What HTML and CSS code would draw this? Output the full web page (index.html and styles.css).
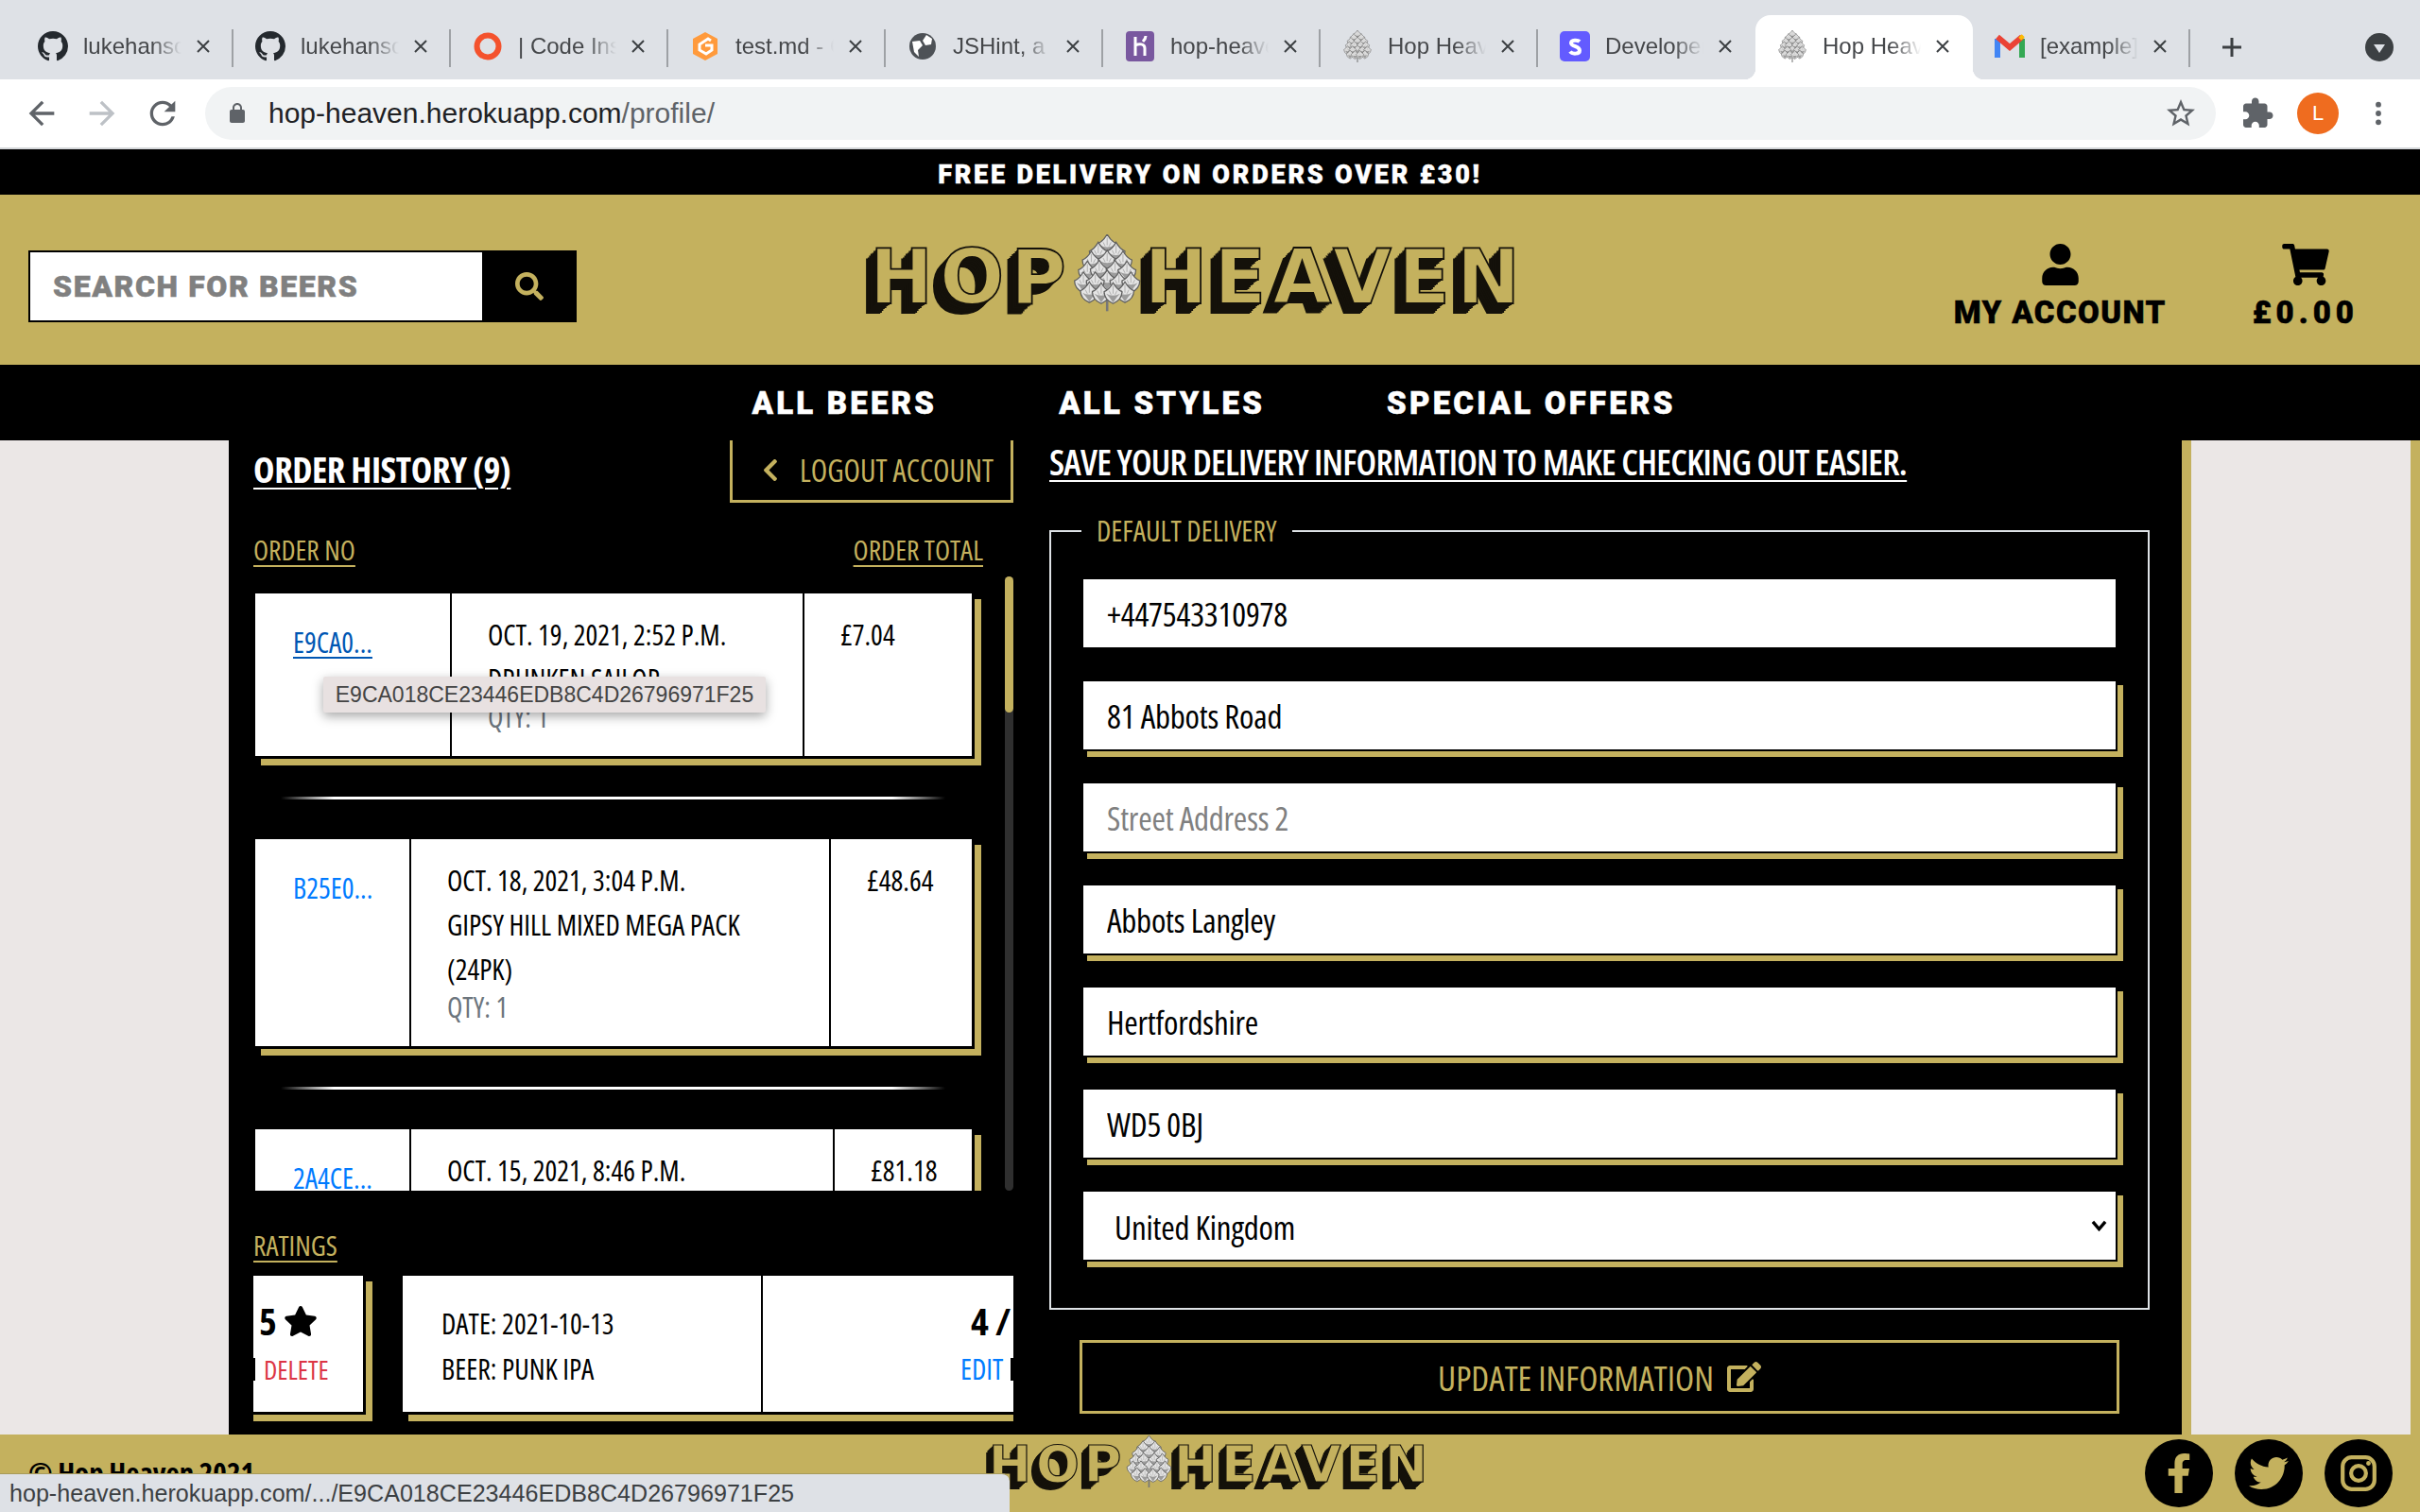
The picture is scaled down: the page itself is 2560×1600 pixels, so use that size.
FILE: index.html
```html
<!doctype html>
<html lang="en">
<head>
<meta charset="utf-8">
<title>Hop Heaven</title>
<link rel="stylesheet" href="styles.css">
</head>
<body>
<svg class="defs" aria-hidden="true">
  <symbol id="x" viewBox="0 0 16 16"><path d="M2 2l12 12M14 2L2 14" stroke="currentColor" stroke-width="2" fill="none"/></symbol>
  <symbol id="gh" viewBox="0 0 16 16"><path fill="#24292e" d="M8 0C3.58 0 0 3.58 0 8c0 3.54 2.29 6.53 5.47 7.59.4.07.55-.17.55-.38 0-.19-.01-.82-.01-1.49-2.01.37-2.53-.49-2.69-.94-.09-.23-.48-.94-.82-1.13-.28-.15-.68-.52-.01-.53.63-.01 1.08.58 1.23.82.72 1.21 1.87.87 2.33.66.07-.52.28-.87.51-1.07-1.78-.2-3.64-.89-3.64-3.95 0-.87.31-1.59.82-2.15-.08-.2-.36-1.02.08-2.12 0 0 .67-.21 2.2.82.64-.18 1.32-.27 2-.27.68 0 1.36.09 2 .27 1.53-1.04 2.2-.82 2.2-.82.44 1.1.16 1.92.08 2.12.51.56.82 1.27.82 2.15 0 3.07-1.87 3.75-3.65 3.95.29.25.54.73.54 1.48 0 1.07-.01 1.93-.01 2.2 0 .21.15.46.55.38A8.013 8.013 0 0016 8c0-4.42-3.58-8-8-8z"/></symbol>
  <symbol id="leaf" viewBox="0 0 20 22" overflow="visible"><path d="M1 9q5-2 9-9q4 7 9 9q0 8-9 12q-9-4-9-12z" fill="#e4e4e4" stroke="#5f5f5f" stroke-width="1.2"/><path d="M3 11q3 3 7 9q4-6 7-9q-3 2-7 2t-7-2z" fill="#9c9c9c"/><path d="M10 3v8M6 8l2 4M14 8l-2 4" stroke="#a8a8a8" stroke-width=".8" fill="none"/></symbol>
  <symbol id="cone" viewBox="0 0 72 78">
    <rect x="34.8" y="66" width="2.4" height="12" fill="#777"/>
    <use href="#leaf" x="26" y="0" width="20" height="22"/>
    <use href="#leaf" x="17" y="8" width="20" height="22"/><use href="#leaf" x="35" y="8" width="20" height="22"/>
    <use href="#leaf" x="10" y="17" width="20" height="22"/><use href="#leaf" x="26" y="16" width="20" height="22"/><use href="#leaf" x="42" y="17" width="20" height="22"/>
    <use href="#leaf" x="6" y="27" width="20" height="22"/><use href="#leaf" x="18" y="26" width="20" height="22"/><use href="#leaf" x="34" y="26" width="20" height="22"/><use href="#leaf" x="46" y="27" width="20" height="22"/>
    <use href="#leaf" x="2" y="38" width="20" height="22"/><use href="#leaf" x="26" y="36" width="20" height="22"/><use href="#leaf" x="14" y="38" width="20" height="22"/><use href="#leaf" x="38" y="38" width="20" height="22"/><use href="#leaf" x="50" y="38" width="20" height="22"/>
    <use href="#leaf" x="8" y="48" width="20" height="22"/><use href="#leaf" x="44" y="48" width="20" height="22"/><use href="#leaf" x="20" y="49" width="20" height="22"/><use href="#leaf" x="32" y="49" width="20" height="22"/>
  </symbol>
</svg>

<div class="chrome">
  <div class="tabstrip">
    <div class="tab"><svg class="fav"><use href="#gh"/></svg><span class="tab-title">lukehanson</span><svg class="tab-x"><use href="#x"/></svg></div>
    <div class="tab"><svg class="fav"><use href="#gh"/></svg><span class="tab-title">lukehanson</span><svg class="tab-x"><use href="#x"/></svg></div>
    <div class="tab"><svg class="fav" viewBox="0 0 32 32"><circle cx="16" cy="16" r="11.5" fill="none" stroke="#f4522d" stroke-width="6"/></svg><span class="tab-title">| Code Institute</span><svg class="tab-x"><use href="#x"/></svg></div>
    <div class="tab"><svg class="fav" viewBox="0 0 32 32"><path d="M16 1L29 8v16l-13 7-13-7V8z" fill="#ff9a3c"/><path d="M22 10l-3-2-9 6v6l7 4 6-4v-5h-7" fill="none" stroke="#fff" stroke-width="3"/></svg><span class="tab-title">test.md - Gitpod</span><svg class="tab-x"><use href="#x"/></svg></div>
    <div class="tab"><svg class="fav" viewBox="0 0 32 32"><circle cx="16" cy="16" r="14" fill="#4d5156"/><path d="M5 11l8-1 3 5-5 5 1 7-5-5zM20 4l6 4-1 6-6 1-3-5z" fill="#fff"/></svg><span class="tab-title">JSHint, a JavaScript</span><svg class="tab-x"><use href="#x"/></svg></div>
    <div class="tab"><svg class="fav" viewBox="0 0 32 32"><rect x="1" y="0" width="30" height="32" rx="4" fill="#79589f"/><path d="M11 6v20M11 15c4-2 10-2 10 3v8M22 5c0 3-1 4-3 6" fill="none" stroke="#fff" stroke-width="3"/></svg><span class="tab-title">hop-heaven</span><svg class="tab-x"><use href="#x"/></svg></div>
    <div class="tab"><svg class="fav"><use href="#cone"/></svg><span class="tab-title">Hop Heaven</span><svg class="tab-x"><use href="#x"/></svg></div>
    <div class="tab tab-before"><svg class="fav" viewBox="0 0 32 32"><rect width="32" height="32" rx="5" fill="#635bff"/><path d="M21 11c-2-2-9-2-9 1.500 0 4 9 3 9 8 0 4-8 4-10 1" fill="none" stroke="#fff" stroke-width="4"/></svg><span class="tab-title">Developers</span><svg class="tab-x"><use href="#x"/></svg></div>
    <div class="tab tab-active"><svg class="fav"><use href="#cone"/></svg><span class="tab-title">Hop Heaven</span><svg class="tab-x"><use href="#x"/></svg></div>
    <div class="tab"><svg class="fav" viewBox="0 0 32 32"><path d="M3 28V8" stroke="#4285f4" stroke-width="6"/><path d="M29 28V8" stroke="#34a853" stroke-width="6"/><path d="M3 6l13 11L29 6" fill="none" stroke="#ea4335" stroke-width="6"/><path d="M27 5l3 3" stroke="#fbbc04" stroke-width="5"/></svg><span class="tab-title">[example] Confirm</span><svg class="tab-x"><use href="#x"/></svg></div>
    <svg class="newtab" viewBox="0 0 24 24"><path d="M12 2v20M2 12h20" stroke="#3c4043" stroke-width="3"/></svg>
    <svg class="tabmenu" viewBox="0 0 30 30"><circle cx="15" cy="15" r="15" fill="#3c4043"/><path d="M9 12h12l-6 9z" fill="#dee1e6"/></svg>
  </div>
  <div class="toolbar">
    <svg class="tool" viewBox="0 0 24 24"><path fill="#5f6368" d="M20 11H7.830l5.590-5.590L12 4l-8 8 8 8 1.410-1.410L7.830 13H20v-2z"/></svg>
    <svg class="tool" viewBox="0 0 24 24"><path fill="#bdc1c6" d="M4 11h12.170l-5.590-5.590L12 4l8 8-8 8-1.410-1.410L16.170 13H4v-2z"/></svg>
    <svg class="tool" viewBox="0 0 24 24"><path fill="#5f6368" d="M17.650 6.350A7.958 7.958 0 0012 4c-4.420 0-7.990 3.580-7.990 8s3.570 8 7.990 8c3.730 0 6.840-2.550 7.730-6h-2.080A5.990 5.990 0 0112 18c-3.310 0-6-2.690-6-6s2.690-6 6-6c1.660 0 3.140.69 4.220 1.780L13 11h7V4l-2.350 2.350z"/></svg>
    <div class="omnibox">
      <svg class="lock" viewBox="0 0 24 24"><path fill="#5f6368" d="M18 8h-1V6c0-2.760-2.240-5-5-5S7 3.240 7 6v2H6c-1.100 0-2 .9-2 2v10c0 1.100.9 2 2 2h12c1.100 0 2-.9 2-2V10c0-1.100-.9-2-2-2zM9 6c0-1.660 1.340-3 3-3s3 1.340 3 3v2H9V6z"/></svg>
      <span class="url">hop-heaven.herokuapp.com<span class="url-path">/profile/</span></span>
      <svg class="star-out" viewBox="0 0 24 24"><path fill="#5f6368" d="M22 9.240l-7.190-.62L12 2 9.190 8.630 2 9.240l5.460 4.730L5.820 21 12 17.270 18.180 21l-1.630-7.030L22 9.240zM12 15.400l-3.760 2.270 1-4.280-3.320-2.880 4.380-.38L12 6.100l1.710 4.040 4.380.38-3.320 2.880 1 4.280L12 15.400z"/></svg>
    </div>
    <svg class="ext" viewBox="0 0 24 24"><path fill="#5f6368" d="M20.500 11H19V7c0-1.100-.9-2-2-2h-4V3.500C13 2.120 11.880 1 10.500 1S8 2.120 8 3.500V5H4c-1.100 0-1.990.9-1.990 2v3.800H3.500c1.490 0 2.700 1.210 2.700 2.700s-1.210 2.700-2.700 2.700H2V20c0 1.100.9 2 2 2h3.800v-1.500c0-1.490 1.210-2.700 2.700-2.700 1.490 0 2.700 1.210 2.700 2.700V22H17c1.100 0 2-.9 2-2v-4h1.500c1.380 0 2.500-1.120 2.500-2.500S21.880 11 20.500 11z"/></svg>
    <span class="avatar">L</span>
    <svg class="dots" viewBox="0 0 6 24"><circle cx="3" cy="4" r="2.500" fill="#5f6368"/><circle cx="3" cy="12" r="2.500" fill="#5f6368"/><circle cx="3" cy="20" r="2.500" fill="#5f6368"/></svg>
  </div>
</div>

<div class="promo">FREE DELIVERY ON ORDERS OVER £30!</div>

<header class="site-head">
  <form class="search">
    <div class="search-field">SEARCH FOR BEERS</div>
    <div class="search-btn"><svg viewBox="0 0 512 512"><path fill="currentColor" d="M505 442.700L405.300 343c-4.500-4.500-10.600-7-17-7H372c27.600-35.300 44-79.700 44-128C416 93.100 322.900 0 208 0S0 93.100 0 208s93.100 208 208 208c48.300 0 92.700-16.400 128-44v16.300c0 6.400 2.500 12.500 7 17l99.700 99.700c9.400 9.400 24.600 9.400 33.900 0l28.300-28.300c9.400-9.400 9.400-24.600.1-34zM208 336c-70.700 0-128-57.200-128-128 0-70.700 57.200-128 128-128 70.700 0 128 57.200 128 128 0 70.700-57.200 128-128 128z"/></svg></div>
  </form>
  <div class="logo logo-head"><span class="logo-word">HOP</span><svg class="logo-cone"><use href="#cone"/></svg><span class="logo-word">HEAVEN</span></div>
  <div class="head-link head-account">
    <svg class="icon-user" viewBox="0 0 448 512"><path d="M224 256c70.700 0 128-57.300 128-128S294.700 0 224 0 96 57.300 96 128s57.300 128 128 128zm89.600 32h-16.700c-22.200 10.200-46.900 16-72.900 16s-50.600-5.800-72.900-16h-16.700C60.200 288 0 348.200 0 422.400V464c0 26.500 21.500 48 48 48h352c26.500 0 48-21.500 48-48v-41.600c0-74.200-60.200-134.400-134.400-134.400z"/></svg>
    <span>MY ACCOUNT</span>
  </div>
  <div class="head-link head-cart">
    <svg class="icon-cart" viewBox="0 0 576 512"><path d="M528.120 301.319l47.273-208C578.806 78.301 567.391 64 551.990 64H159.208l-9.166-44.810C147.758 8.021 137.930 0 126.529 0H24C10.745 0 0 10.745 0 24v16c0 13.255 10.745 24 24 24h69.883l70.248 343.435C147.325 417.100 136 435.222 136 456c0 30.928 25.072 56 56 56s56-25.072 56-56c0-15.674-6.447-29.835-16.824-40h209.647C430.447 426.165 424 440.326 424 456c0 30.928 25.072 56 56 56s56-25.072 56-56c0-22.172-12.888-41.332-31.579-50.405l5.517-24.276c3.413-15.018-8.002-29.319-23.403-29.319H218.117l-6.545-32h293.145c11.206 0 20.920-7.754 23.403-18.681z"/></svg>
    <span>£0.00</span>
  </div>
</header>

<nav class="site-nav"><a>ALL BEERS</a><a>ALL STYLES</a><a>SPECIAL OFFERS</a></nav>

<div class="page">
  <div class="gutter"></div>
  <main class="panel">
    <section class="col-left">
      <div class="history-head">
        <h2 class="title title-history">ORDER HISTORY (9)</h2>
        <a class="logout"><svg viewBox="0 0 320 512"><path fill="currentColor" d="M34.520 239.030L228.870 44.690c9.370-9.370 24.570-9.370 33.940 0l22.670 22.670c9.360 9.360 9.370 24.520.04 33.900L131.490 256l154.020 154.750c9.340 9.380 9.320 24.540-.04 33.900l-22.670 22.670c-9.370 9.370-24.570 9.370-33.940 0L34.520 272.970c-9.370-9.370-9.370-24.570 0-33.940z"/></svg>LOGOUT ACCOUNT</a>
      </div>
      <div class="orders-head"><span class="label">ORDER NO</span><span class="label">ORDER TOTAL</span></div>
      <div class="orders">
        <div class="orders-list">
          <article class="order order-a">
            <div class="cell"><a class="ref ref-hover">E9CA0...</a></div>
            <div class="cell cell-main"><p>OCT. 19, 2021, 2:52 P.M.</p><p>DRUNKEN SAILOR</p><p class="qty">QTY: 1</p></div>
            <div class="cell cell-main"><p>£7.04</p></div>
            <div class="tooltip">E9CA018CE23446EDB8C4D26796971F25</div>
          </article>
          <hr class="rule">
          <article class="order order-b">
            <div class="cell"><a class="ref">B25E0...</a></div>
            <div class="cell cell-main"><p>OCT. 18, 2021, 3:04 P.M.</p><p>GIPSY HILL MIXED MEGA PACK</p><p>(24PK)</p><p class="qty">QTY: 1</p></div>
            <div class="cell cell-main"><p>£48.64</p></div>
          </article>
          <hr class="rule">
          <article class="order order-c">
            <div class="cell"><a class="ref">2A4CE...</a></div>
            <div class="cell cell-main"><p>OCT. 15, 2021, 8:46 P.M.</p></div>
            <div class="cell cell-main"><p>£81.18</p></div>
          </article>
        </div>
        <div class="scrollbar"><div class="thumb"></div></div>
      </div>
      <div class="ratings-head"><span class="label">RATINGS</span></div>
      <div class="ratings">
        <article class="rate rate-a">
          <div class="score">5 <svg class="star" viewBox="0 0 576 512"><path d="M259.300 17.800L194 150.200 47.900 171.500c-26.200 3.800-36.700 36.100-17.700 54.600l105.700 103-25 145.500c-4.500 26.300 23.200 46 46.400 33.700L288 439.600l130.700 68.700c23.200 12.200 50.900-7.400 46.400-33.700l-25-145.500 105.700-103c19-18.500 8.500-50.800-17.700-54.600L382 150.200 316.700 17.800c-11.700-23.600-45.600-23.900-57.400 0z"/></svg></div>
          <div class="act"><i class="tick"></i><a class="del">DELETE</a></div>
        </article>
        <article class="rate rate-b">
          <div class="rate-info"><p>DATE: 2021-10-13</p><p>BEER: PUNK IPA</p></div>
          <div class="rate-side">
            <div class="score">4 /</div>
            <div class="act"><a class="edit">EDIT</a><i class="tick tick-wide"></i></div>
          </div>
        </article>
      </div>
    </section>
    <section class="col-right">
      <h2 class="title title-save">SAVE YOUR DELIVERY INFORMATION TO MAKE CHECKING OUT EASIER.</h2>
      <form class="delivery">
        <fieldset class="fields">
          <legend>DEFAULT DELIVERY</legend>
          <input class="field field-plain" value="+447543310978">
          <input class="field" value="81 Abbots Road">
          <input class="field" placeholder="Street Address 2">
          <input class="field" value="Abbots Langley">
          <input class="field" value="Hertfordshire">
          <input class="field" value="WD5 0BJ">
          <div class="select-wrap">
            <select class="field field-select"><option>United Kingdom</option></select>
            <svg class="select-arrow" viewBox="0 0 14 10"><path d="M1.500 1.500L7 8l5.500-6.500" fill="none" stroke="#000" stroke-width="2.800"/></svg>
          </div>
        </fieldset>
        <button class="update" type="button">UPDATE INFORMATION
          <svg viewBox="0 0 576 512"><path fill="currentColor" d="M402.600 83.200l90.200 90.200c3.800 3.800 3.800 10 0 13.800L274.400 405.600l-92.800 10.300c-12.400 1.400-22.900-9.100-21.500-21.500l10.300-92.800L388.800 83.200c3.800-3.800 10-3.800 13.800 0zm162-22.900l-48.800-48.800c-15.200-15.200-39.900-15.200-55.200 0l-35.400 35.400c-3.800 3.800-3.800 10 0 13.800l90.200 90.200c3.800 3.800 10 3.800 13.800 0l35.400-35.400c15.200-15.300 15.200-40 0-55.200zM384 346.200V448H64V128h229.800c3.200 0 6.200-1.300 8.500-3.500l40-40c7.600-7.600 2.200-20.500-8.500-20.500H48C21.500 64 0 85.500 0 112v352c0 26.500 21.500 48 48 48h352c26.500 0 48-21.500 48-48V306.200c0-10.700-12.900-16-20.500-8.500l-40 40c-2.200 2.300-3.500 5.300-3.500 8.500z"/></svg>
        </button>
      </form>
    </section>
  </main>
  <div class="gutter gutter-right"></div>
</div>

<footer class="site-foot">
  <div class="copy">© Hop Heaven 2021</div>
  <div class="logo logo-foot"><span class="logo-word">HOP</span><svg class="logo-cone"><use href="#cone"/></svg><span class="logo-word">HEAVEN</span></div>
  <div class="social">
    <a class="soc"><svg viewBox="0 0 320 512"><path d="M279.140 288l14.220-92.660h-88.910v-60.130c0-25.350 12.420-50.060 52.240-50.060h40.420V6.260S260.430 0 225.360 0c-73.220 0-121.080 44.380-121.080 124.720v70.620H22.890V288h81.390v224h100.170V288z"/></svg></a>
    <a class="soc"><svg viewBox="0 0 512 512"><path d="M459.370 151.716c.325 4.548.325 9.097.325 13.645 0 138.720-105.583 298.558-298.558 298.558-59.452 0-114.680-17.219-161.137-47.106 8.447.974 16.568 1.299 25.340 1.299 49.055 0 94.213-16.568 130.274-44.832-46.132-.975-84.792-31.188-98.112-72.772 6.498.974 12.995 1.624 19.818 1.624 9.421 0 18.843-1.300 27.614-3.573-48.081-9.747-84.143-51.980-84.143-102.985v-1.299c13.969 7.797 30.214 12.670 47.431 13.319-28.264-18.843-46.781-51.005-46.781-87.391 0-19.492 5.197-37.360 14.294-52.954 51.655 63.675 129.300 105.258 216.365 109.807-1.624-7.797-2.599-15.918-2.599-24.040 0-57.828 46.782-104.934 104.934-104.934 30.213 0 57.502 12.670 76.670 33.137 23.715-4.548 46.456-13.320 66.599-25.340-7.798 24.366-24.366 44.833-46.132 57.827 21.117-2.273 41.584-8.122 60.426-16.243-14.292 20.791-32.161 39.308-52.628 54.253z"/></svg></a>
    <a class="soc"><svg viewBox="0 0 40 40"><rect x="4" y="4" width="32" height="32" rx="9" fill="none" stroke="currentColor" stroke-width="4"/><circle cx="20" cy="20" r="7.500" fill="none" stroke="currentColor" stroke-width="4"/><circle cx="30" cy="10" r="2.300"/></svg></a>
  </div>
</footer>

<div class="statusbar">hop-heaven.herokuapp.com/.../E9CA018CE23446EDB8C4D26796971F25</div>
</body>
</html>
```
FILE: styles.css
```css
:root { --gold: #c4b15e; --light: #ebe7e6; --cond: "Open Sans", "Liberation Sans", sans-serif; --disp: Roboto, "Liberation Sans", sans-serif; }
* { box-sizing: border-box; }
html, body { margin: 0; height: 100%; }
body { width: 2560px; height: 1600px; overflow: hidden; display: flex; flex-direction: column; background: #000; position: relative; font-family: var(--cond); font-stretch: 75%; }
.defs { position: absolute; width: 0; height: 0; }
p, h2 { margin: 0; }

/* browser chrome */
.chrome { flex: none; height: 158px; background: #fff; font-family: "Liberation Sans", sans-serif; font-stretch: normal; border-bottom: 2px solid #d5d7da; }
.tabstrip { height: 84px; background: #dee1e6; display: flex; align-items: flex-end; padding-left: 17px; }
.tab { width: 230px; height: 68px; display: flex; align-items: center; padding: 0 20px 2px 23px; position: relative; color: #3c4043; flex: none; }
.tab::after { content: ""; position: absolute; right: 0; top: 15px; height: 40px; width: 2px; background: #9ea1a5; }
.tab-before::after, .tab-active::after { display: none; }
.tab-active { background: #fff; border-radius: 16px 16px 0 0; }
.tab-active::before { content: ""; position: absolute; bottom: 0; left: -12px; right: -12px; height: 12px; background: radial-gradient(circle at 0 0, #dee1e6 12px, transparent 12.500px) 0 0 / 12px 12px no-repeat, radial-gradient(circle at 100% 0, #dee1e6 12px, transparent 12.500px) 100% 0 / 12px 12px no-repeat, #fff; z-index: 0; }
.tab-active > * { position: relative; z-index: 1; }
.fav { width: 32px; height: 34px; flex: none; }
.tab-title { margin-left: 16px; width: 104px; overflow: hidden; white-space: nowrap; font-size: 24px; color: #45474a; -webkit-mask-image: linear-gradient(90deg, #000 70%, transparent); mask-image: linear-gradient(90deg, #000 70%, transparent); }
.tab-x { width: 16px; height: 16px; margin-left: 15px; flex: none; }
.newtab { width: 24px; height: 24px; margin: 0 0 22px 32px; flex: none; }
.tabmenu { width: 30px; height: 30px; margin: 0 0 19px 129px; flex: none; }
.toolbar { height: 72px; display: flex; align-items: center; padding: 0 0 0 24px; }
.tool { width: 40px; height: 40px; margin-right: 24px; flex: none; }
.omnibox { width: 2127px; margin-left: 1px; height: 56px; border-radius: 28px; background: #f1f3f4; display: flex; align-items: center; padding: 0 19px 0 22px; }
.lock { width: 24px; height: 24px; margin-right: 21px; }
.url { font-size: 30px; color: #202124; flex: 1; }
.url-path { color: #5f6368; }
.star-out { width: 36px; height: 36px; }
.ext { width: 36px; height: 36px; margin-left: 26px; flex: none; }
.avatar { width: 44px; height: 44px; border-radius: 50%; background: #ef6c1f; color: #fff; font-size: 22px; display: flex; align-items: center; justify-content: center; margin-left: 24px; flex: none; }
.dots { width: 8px; height: 28px; margin-left: 38px; flex: none; }

/* site header */
.promo { flex: none; height: 48px; background: #000; color: #fff; text-align: center; font: 900 27px/54px var(--disp); font-stretch: normal; letter-spacing: 2.800px; -webkit-text-stroke: .5px #fff; }
.site-head { flex: none; height: 180px; background: var(--gold); display: flex; align-items: center; padding: 0 65px 0 30px; }
.search { width: 580px; height: 76px; display: flex; background: #000; padding: 2px 0 2px 2px; margin-top: 14px; }
.search-field { flex: 1; background: #fff; color: #808080; font: 900 32px/72px var(--disp); font-stretch: normal; padding-left: 24px; letter-spacing: 1.600px; -webkit-text-stroke: .5px #808080; }
.search-btn { width: 100px; color: var(--gold); display: flex; align-items: center; justify-content: center; }
.search-btn svg { width: 30px; height: 30px; }

.logo { display: flex; align-items: center; color: var(--gold); font-family: "DejaVu Sans", sans-serif; font-stretch: normal; font-weight: 700; }
.logo-head { font-size: 80px; margin-left: 310px; width: 693px; margin-top: -4px; }
.logo-foot { font-size: 54px; justify-content: center; margin-top: -18px; }
.logo-word { color: var(--gold); line-height: 1; letter-spacing: .09em; -webkit-text-stroke: .022em #14110a; text-shadow: -.02em .02em 0 #14110a, -.04em .04em 0 #14110a, -.06em .06em 0 #14110a, -.08em .08em 0 #14110a, -.1em .1em 0 #14110a, -.12em .12em 0 #14110a, -.14em .14em 0 #14110a; }
.logo-cone { width: .98em; height: 1.02em; margin: -.12em 0 0 -.04em; flex: none; }

.head-link { display: flex; flex-direction: column; align-items: center; font: 900 33px/1 var(--disp); font-stretch: normal; color: #000; letter-spacing: 1.400px; margin-top: 12px; -webkit-text-stroke: .5px #000; }
.head-link svg { height: 44px; fill: #000; margin-bottom: 12px; }
.head-account { margin-left: auto; }
.head-cart { margin-left: 91px; letter-spacing: 5px; }
.icon-user { width: 39px; }
.icon-cart { width: 50px; }

.site-nav { flex: none; height: 80px; background: #000; display: flex; justify-content: center; align-items: center; gap: 129px; color: #fff; font: 900 33px/1 var(--disp); font-stretch: normal; letter-spacing: 3.200px; -webkit-text-stroke: .5px #fff; padding-left: 8px; }

/* main */
.page { flex: 1; min-height: 0; display: flex; background: var(--light); }
.gutter { width: 242px; flex: none; }
.gutter-right { width: 242px; border-right: 10px solid var(--gold); }
.panel { width: 2076px; flex: none; background: #000; border-right: 10px solid var(--gold); display: flex; gap: 38px; padding-left: 26px; overflow: hidden; }
.col-left { width: 804px; flex: none; }
.col-right { width: 1164px; flex: none; }
.title { color: #fff; font-size: 38px; font-weight: 600; line-height: 44px; text-decoration: underline; text-underline-offset: 5px; text-decoration-thickness: 2px; }
.title-history { font-weight: 700; margin-top: 8px; letter-spacing: -.4px; }
.history-head { height: 66px; display: flex; justify-content: space-between; align-items: flex-start; }
.logout { width: 300px; height: 66px; border: 3px solid var(--gold); border-top: 0; color: var(--gold); font-size: 32px; display: flex; align-items: center; white-space: nowrap; padding-left: 30px; }
.logout svg { width: 20px; height: 27px; margin-right: 21px; }
.orders-head { height: 46px; margin-top: 27px; display: flex; justify-content: space-between; padding-right: 32px; align-items: center; }
.label { color: var(--gold); font-size: 29.500px; line-height: 46px; text-decoration: underline; text-decoration-thickness: 2px; text-underline-offset: 5px; }
.orders { height: 650px; margin-top: 5px; position: relative; overflow: hidden; padding: 18px 0 0 2px; }
.scrollbar { position: absolute; right: 0; top: 0; bottom: 0; width: 9px; background: #2f2f2f; border-radius: 5px; }
.thumb { height: 144px; background: var(--gold); border-radius: 5px; }
.order { width: 758px; background: #fff; color: #000; display: grid; position: relative; font-size: 30px; box-shadow: 0 0 0 3px #000, 8px 8px 0 2px var(--gold); }
.order-a { grid-template-columns: 206px 373px 179px; }
.order-b { grid-template-columns: 163px 444px 151px; }
.order-c { grid-template-columns: 163px 448px 147px; height: 120px; }
.cell { padding: 28px 0 0 40px; line-height: 47px; }
.cell-main { border-left: 2px solid #000; padding: 20px 0 24px 38px; }
.ref { color: #007bff; }
.ref-hover { color: #0056b3; text-decoration: underline; text-underline-offset: 4px; text-decoration-thickness: 2px; }
.qty { color: #6c757d; line-height: 34px; }
.rule { height: 3px; width: 703px; margin: 43px 0 42px 27px; border: 0; background: linear-gradient(90deg, transparent, #fff 8%, #fff 92%, transparent); }
.tooltip { position: absolute; left: 72px; top: 88px; width: 468px; height: 38px; background: #e8e1e1; color: #444; font: 400 23px/38px "Liberation Sans", sans-serif; font-stretch: normal; text-align: center; box-shadow: 0 4px 12px rgba(0, 0, 0, .35); border-radius: 2px; white-space: nowrap; }
.ratings-head { height: 46px; margin-top: 35px; }
.ratings { height: 158px; margin-top: 9px; display: flex; overflow: hidden; }
.rate { height: 144px; background: #fff; color: #000; flex: none; box-shadow: 0 0 0 3px #000, 8px 8px 0 2px var(--gold); font-size: 30px; }
.rate-a { width: 136px; margin-left: -20px; padding-left: 26px; }
.rate-b { width: 800px; margin-left: 42px; display: flex; }
.rate-info { width: 379px; padding: 27px 0 0 41px; line-height: 48px; }
.rate-side { border-left: 2px solid #000; padding-left: 220px; }
.score { font-size: 40px; font-weight: 700; line-height: 48px; margin-top: 24px; display: flex; align-items: center; white-space: pre; }
.star { width: 36px; height: 32px; }
.act { display: flex; align-items: center; line-height: 48px; position: relative; margin-top: 3px; }
.tick { position: absolute; left: -6px; top: 12px; width: 2px; height: 24px; background: #000; }
.del { color: #dc3545; margin-left: 5px; font-size: 28px; }
.edit { color: #007bff; margin-left: -11px; }
.tick-wide { left: 42px; width: 4px; }

.title-save { line-height: 44px; letter-spacing: -.75px; white-space: nowrap; }
.delivery { display: block; }
.fields { width: 1164px; height: 844px; margin: 32px 0 0; padding: 31px 34px 0; border: 2px solid #dee2e6; display: flex; flex-direction: column; gap: 36px; min-inline-size: 0; }
.fields legend { margin-left: -2px; padding: 0 16px; color: var(--gold); font-size: 30px; line-height: 40px; }
.field { display: block; width: 1092px; height: 72px; background: #fff; border: 0; border-radius: 0; outline: 0; color: #000; padding: 0 25px; font-family: var(--cond); font-stretch: 75%; font-size: 35px; letter-spacing: -.2px; box-shadow: 0 0 0 2px #000, 6px 6px 0 2px var(--gold); }
.field-plain { box-shadow: none; }
.field::placeholder { color: #808080; opacity: 1; }
.select-wrap { position: relative; }
.field-select { appearance: none; padding: 3px 25px 0 33px; }
.select-arrow { position: absolute; right: 9px; top: 30px; width: 17px; height: 12px; }
.update { display: flex; align-items: center; justify-content: center; gap: 14px; width: 1100px; height: 78px; margin: 32px 0 0 32px; background: #000; border: 3px solid var(--gold); color: var(--gold); font-family: var(--cond); font-stretch: 75%; font-size: 37px; }
.update svg { width: 36px; height: 32px; }

/* footer */
.site-foot { flex: none; height: 82px; background: var(--gold); display: grid; grid-template-columns: 1fr auto 1fr; align-items: center; padding: 0 29px 0 30px; }
.copy { color: #000; font-size: 31px; font-weight: 700; margin-top: -2px; }
.social { display: flex; justify-content: flex-end; gap: 23px; }
.soc { width: 72px; height: 72px; border-radius: 50%; background: #000; color: var(--gold); display: flex; align-items: center; justify-content: center; }
.soc svg { width: 42px; height: 42px; fill: var(--gold); }

.statusbar { position: absolute; left: 0; bottom: 0; width: 1068px; height: 41px; background: #dee1e6; border-top: 1px solid #a79a5a; border-top-right-radius: 8px; padding-left: 10px; color: #3c4043; font: 400 25.100px/40px "Liberation Sans", sans-serif; font-stretch: normal; }
```
